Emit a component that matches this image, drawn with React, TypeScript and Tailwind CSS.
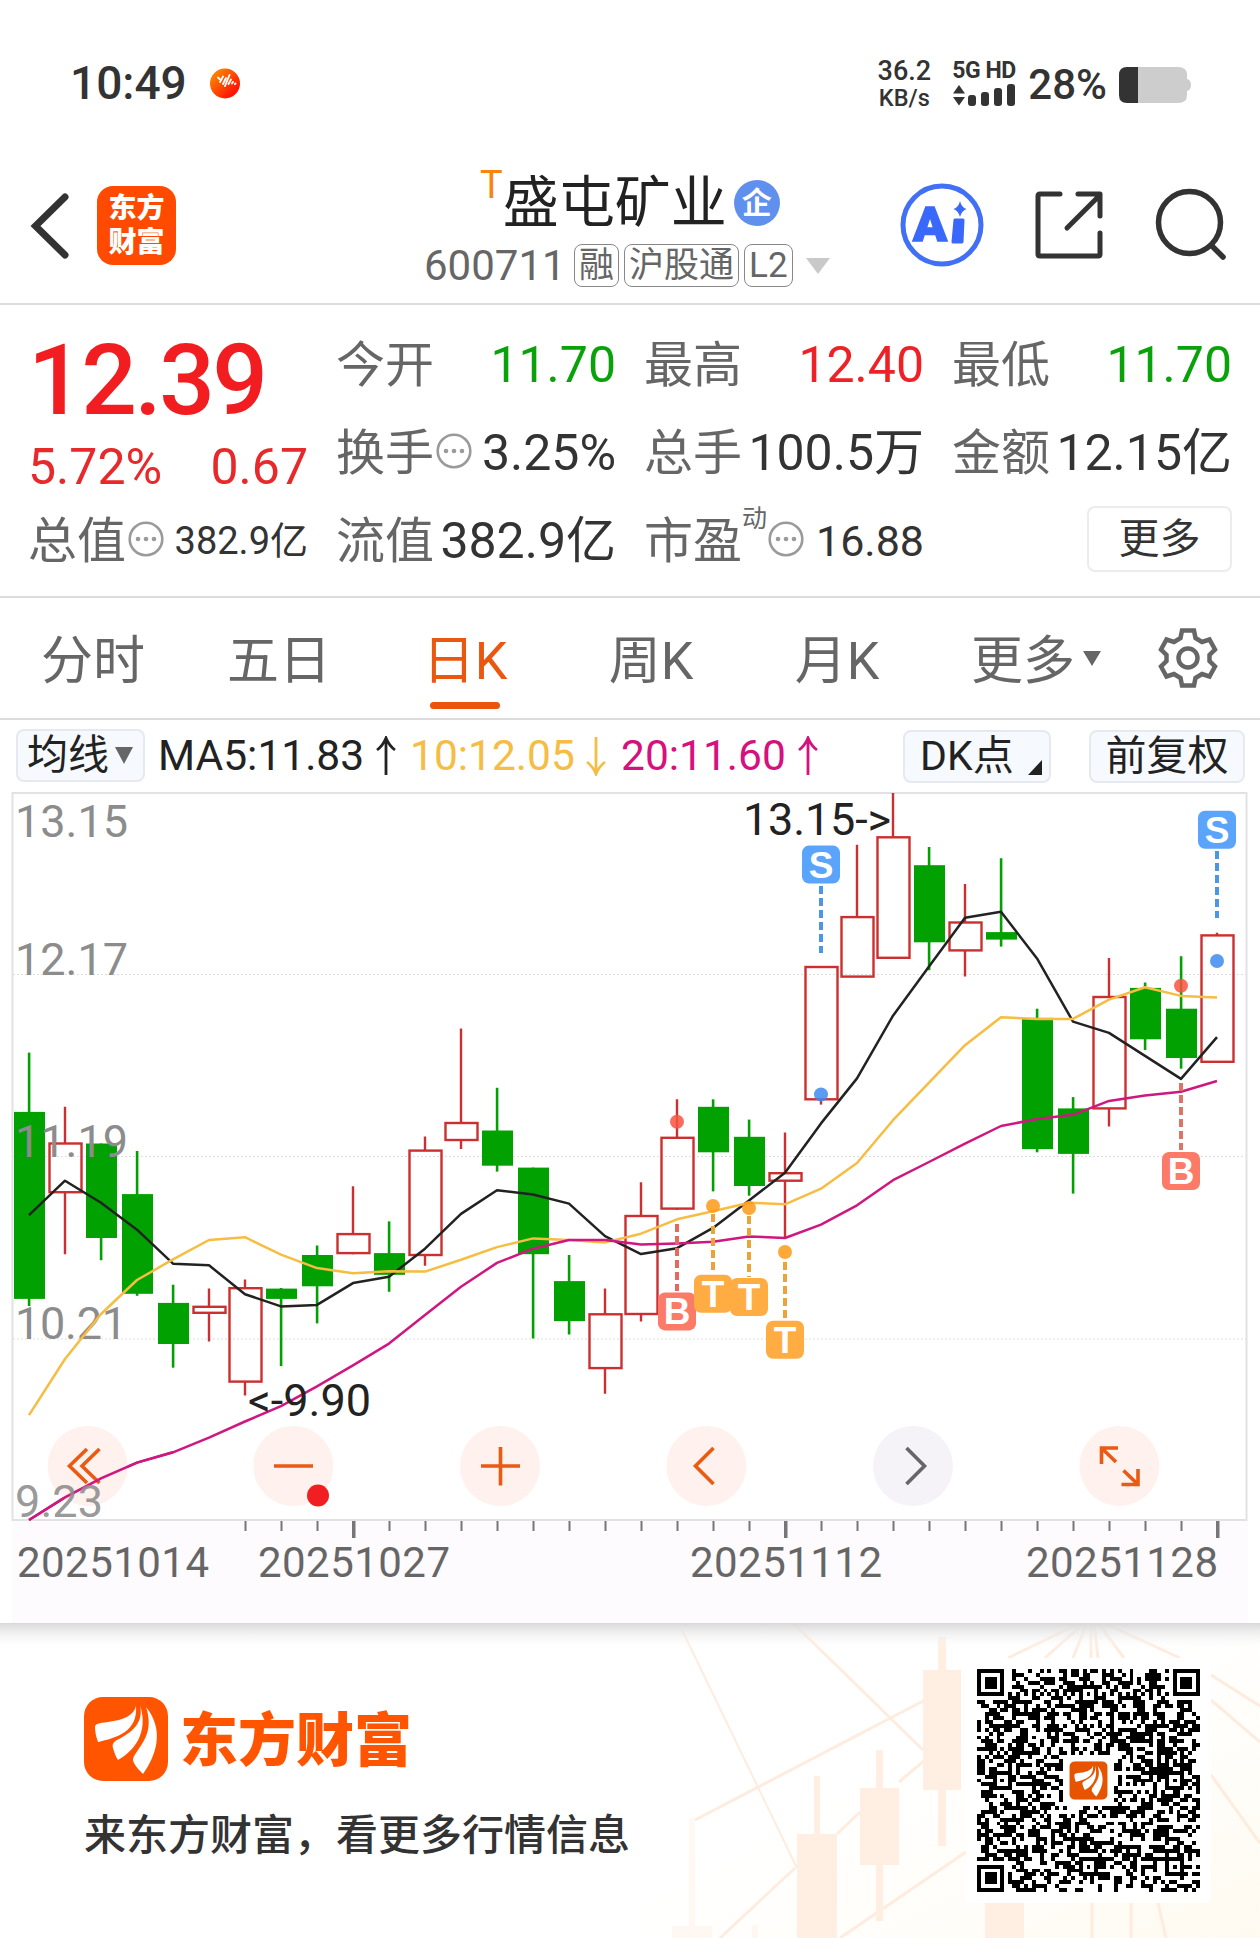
import type { ReactNode } from "react";

type Candle = [dir: "up" | "down", high: number, top: number, bottom: number, low: number];

// y values are in the coordinate space of the chart's viewBox (starts at y=792)
const candles: Candle[] = [
  ["down", 1052.6, 1111.9, 1298.9, 1306],
  ["up", 1106.8, 1143.5, 1192.2, 1254.2],
  ["down", 1143.5, 1143.5, 1238, 1260.2],
  ["down", 1151, 1194.1, 1293.8, 1295.8],
  ["down", 1284.7, 1302.9, 1344, 1367.7],
  ["up", 1288.6, 1306.8, 1312.8, 1341.6],
  ["up", 1279.5, 1288.2, 1381.6, 1395.4],
  ["down", 1288, 1288.6, 1298.9, 1366.1],
  ["down", 1245.5, 1255, 1286.3, 1323.4],
  ["up", 1186.2, 1234.1, 1253.1, 1254.2],
  ["down", 1221.4, 1253.1, 1274.8, 1291.8],
  ["up", 1136.4, 1150.6, 1255, 1265.7],
  ["up", 1028.5, 1123, 1140, 1149.1],
  ["down", 1087.8, 1130.5, 1165.7, 1171.6],
  ["down", 1167.6, 1167.6, 1254.2, 1338.5],
  ["down", 1255, 1281.1, 1321.1, 1334.5],
  ["up", 1288.6, 1314.3, 1368.1, 1393.8],
  ["up", 1182.3, 1216, 1314, 1321.6],
  ["up", 1099.3, 1137.8, 1208.6, 1210],
  ["down", 1099.3, 1106.8, 1152.3, 1191.4],
  ["down", 1119.6, 1136.8, 1186, 1195.7],
  ["up", 1132.5, 1173.2, 1180.7, 1238],
  ["up", 967, 967, 1099.3, 1104.6],
  ["up", 844.8, 917.1, 976.6, 976.6],
  ["up", 793, 837.3, 957.8, 957.8],
  ["down", 847, 865.2, 942.3, 970.2],
  ["up", 883.9, 922.5, 950.4, 976.6],
  ["down", 858.2, 932.1, 939.6, 946.6],
  ["down", 1008.7, 1017.9, 1149.1, 1152.3],
  ["down", 1097.1, 1108.4, 1153.9, 1193.6],
  ["up", 957.9, 997, 1108.4, 1126.6],
  ["down", 982.5, 987.9, 1039.3, 1050],
  ["down", 956.2, 1008.7, 1058, 1068.7],
  ["up", 932.7, 935.4, 1061.8, 1061.8],
];

const ma5 = [
  1215.1, 1180.7, 1202.8, 1229.7, 1263.7, 1265.3, 1294.2, 1306.4, 1304.9, 1283.1, 1276.8, 1248.7,
  1213.9, 1190.2, 1194.5, 1203.6, 1236.1, 1254.1, 1248.2, 1227.9, 1200.5, 1172.7, 1123.4, 1078.4,
  1015.7, 966.4, 917.7, 911.8, 958.4, 1021.6, 1032.9, 1055.9, 1078.9, 1037.1,
];
const ma10 = [
  1415.2, 1359, 1314, 1280, 1259.4, 1240, 1237.2, 1254.6, 1268.1, 1273.2, 1271.2, 1271.6, 1259.8,
  1247.1, 1238.4, 1240, 1242.4, 1233.7, 1219.3, 1211.2, 1202.7, 1204.3, 1188.7, 1163, 1120.2,
  1082.7, 1045.2, 1017.3, 1018.9, 1018.9, 999.6, 987.3, 995.9, 997.5,
];
const ma20 = [
  1520, 1497.4, 1478.4, 1462.6, 1452.3, 1437.7, 1421.5, 1406.1, 1386.3, 1365.3, 1343.6, 1315.1,
  1286.7, 1262.9, 1248.7, 1240, 1240, 1244.5, 1243.4, 1241.8, 1236.4, 1238, 1224.6, 1205.3, 1180.2,
  1162, 1143.7, 1126, 1119.1, 1114.8, 1100.9, 1095.5, 1091.8, 1081,
];

const markers = [
  { i: 22, y: 864.6, from: 886, to: 953, dot: 1094.5, label: "S", color: "#5aa4fb", dash: "#4a97e6" },
  { i: 33, y: 829.8, from: 851, to: 918, dot: 961, label: "S", color: "#5aa4fb", dash: "#4a97e6" },
  { i: 18, y: 1311.4, from: 1224, to: 1291, dot: 1121.8, label: "B", color: "#fb7b68", dash: "#e56a5c" },
  { i: 32, y: 1171, from: 1083, to: 1150, dot: 985.7, label: "B", color: "#fb7b68", dash: "#dd7466" },
  { i: 19, y: 1293.7, from: 1214, to: 1274, dot: 1205.9, label: "T", color: "#ffac42", dash: "#eba43a" },
  { i: 20, y: 1297, from: 1216, to: 1277, dot: 1208, label: "T", color: "#ffac42", dash: "#eba43a" },
  { i: 21, y: 1339.8, from: 1262, to: 1320, dot: 1252, label: "T", color: "#ffac42", dash: "#eba43a" },
];

const dotColors: Record<string, string> = { S: "#3d8bf0", B: "#f9543f", T: "#fb9a17" };

const cx = (i: number) => 29 + i * 36;
const toPoints = (ys: number[]) => ys.map((y, i) => `${cx(i)},${y}`).join(" ");

function More() {
  return (
    <svg width="36" height="42" viewBox="0 0 36 42">
      <circle cx="18" cy="19" r="16.3" fill="none" stroke="#9a9a9a" strokeWidth="2.6" />
      <circle cx="10" cy="19" r="2.3" fill="#9a9a9a" />
      <circle cx="18" cy="19" r="2.3" fill="#9a9a9a" />
      <circle cx="26" cy="19" r="2.3" fill="#9a9a9a" />
    </svg>
  );
}

function BrandMark({ size, color, radius }: { size: number; color: string; radius: number }) {
  return (
    <svg width={size} height={size} viewBox="0 0 84 84">
      <rect width="84" height="84" rx={radius} fill={color} />
      <path d="M52 9C50 18 40 23 24 25C15 26 11 27 11 30C11 34 12 40 14 45C32 41 54 35 52 9Z" fill="#fff" />
      <path d="M56 8C60 26 48 35 35 42C29 45 28 47 29 51C30 55 32 60 34 63C50 54 65 36 56 8Z" fill="#fff" />
      <path d="M62 10C69 31 61 43 54 53C49 60 48 62 50 66C52 70 56 74 59 77C72 59 81 33 62 10Z" fill="#fff" />
    </svg>
  );
}

function StatusBar() {
  return (
    <div className="flex h-[168px] items-center pl-[70px] font-medium text-[#333]">
      <span className="-mt-[2px] text-[46px] leading-none">10:49</span>
      <svg className="ml-[22px]" width="32" height="32" viewBox="0 0 32 32">
        <defs>
          <linearGradient id="dot" x1="0" y1="0" x2="1" y2="1">
            <stop offset="0.2" stopColor="#ff7a00" />
            <stop offset="0.8" stopColor="#ff1400" />
          </linearGradient>
        </defs>
        <circle cx="16" cy="15.500" r="15" fill="url(#dot)" />
        <path
          d="M9 9.5L10.5 11M11 14L14 8.500M14 16L17 10M16 18L20.500 7M19.500 16L22 11.500M23 15.500L24 14M26 16L26.500 15.500"
          stroke="#fff"
          strokeWidth="1.9"
          strokeLinecap="round"
        />
      </svg>
      <div className="ml-auto flex w-14 flex-col items-center gap-[3px]">
        <span className="text-[27px] leading-[25px]">36.2</span>
        <span className="text-[23.5px] leading-[23px]">KB/s</span>
      </div>
      <div className="-mt-[3px] ml-[20px] flex w-[64px] flex-col">
        <span className="text-[23px] leading-[25px] font-bold tracking-[-0.500px] whitespace-nowrap">5G HD</span>
        <svg width="64" height="24" viewBox="0 0 64 24" fill="#333">
          <path d="M7 2L13 10.500H1ZM7 22.500L13 14H1Z" />
          <rect x="16" y="12" width="8" height="11" rx="3" />
          <rect x="29" y="9" width="8" height="14" rx="3" />
          <rect x="42" y="5" width="8" height="18" rx="3" />
          <rect x="55" y="1" width="8" height="22" rx="3" />
        </svg>
      </div>
      <span className="mt-[2px] ml-[12px] text-[42px] leading-none">28%</span>
      <svg className="mt-[2px] mr-[68px] ml-[11px]" width="74" height="38" viewBox="0 0 74 38">
        <path d="M19 1H60Q69 1 69 9V13Q73 14 73 19Q73 24 69 25V29Q69 37 60 37H19Z" fill="#cdcdcd" />
        <path d="M20 1H9Q1 1 1 9V29Q1 37 9 37H20Z" fill="#333" />
      </svg>
    </div>
  );
}

function Tag({ children }: { children: ReactNode }) {
  return (
    <span className="flex h-[43px] items-center rounded-lg border-[1.5px] border-[#888] px-1 text-[35px] leading-none whitespace-nowrap">
      {children}
    </span>
  );
}

function Header() {
  return (
    <header className="flex h-[137px] items-start border-b-2 border-[#dadcde]">
      <svg className="mt-[22px] ml-[28px]" width="44" height="72" viewBox="0 0 44 72">
        <path d="M37 7L7.500 36L37 65" fill="none" stroke="#333" strokeWidth="7" strokeLinecap="round" />
      </svg>
      <div className="mt-[18px] ml-[25px] flex size-[79px] flex-col items-center justify-center rounded-2xl bg-[#ff4a00] text-[28px] leading-[34px] font-black text-white">
        <span>东方</span>
        <span>财富</span>
      </div>
      <div className="ml-[248px] flex w-[408px] flex-col">
        <div className="flex h-[70px] items-center pl-[56px]">
          <span className="-mt-[36px] text-[38px] leading-none text-[#f98510]">T</span>
          <span className="text-[56px] leading-none whitespace-nowrap text-[#222]">盛屯矿业</span>
          <span className="ml-[7px] flex size-[46px] shrink-0 items-center justify-center rounded-full bg-[#6090ee] text-[30px] leading-none font-bold text-white">
            企
          </span>
        </div>
        <div className="mt-[6px] flex items-center gap-[5px] text-[#666]">
          <span className="mr-[6px] w-[139px] text-[42px] leading-none">600711</span>
          <Tag>融</Tag>
          <Tag>沪股通</Tag>
          <Tag>L2</Tag>
          <svg className="ml-[7px]" width="26" height="18" viewBox="0 0 26 18">
            <path d="M1 1H25L13 17Z" fill="#c9c9c9" />
          </svg>
        </div>
      </div>
      <svg className="mt-[14px] ml-[67px]" width="86" height="86" viewBox="0 0 86 86">
        <circle cx="43" cy="43" r="39" fill="none" stroke="#4170f5" strokeWidth="5" />
        <text
          x="14"
          y="59"
          fontSize="48"
          fontWeight="900"
          fill="#3a68fb"
          stroke="#3a68fb"
          strokeWidth="1.500"
          textLength="34"
          lengthAdjust="spacingAndGlyphs"
          className="font-[Roboto]"
        >
          A
        </text>
        <path d="M56 38H64L63 60H54Z" fill="#3a68fb" stroke="#3a68fb" strokeWidth="3" strokeLinejoin="round" />
        <path d="M61 19Q62.500 25.500 67.500 27Q62.500 29 61 35Q59.500 29 54.500 27Q59.500 25.500 61 19Z" fill="#3a68fb" />
      </svg>
      <svg
        className="mt-[19px] ml-[47px]"
        width="74"
        height="74"
        viewBox="0 0 74 74"
        fill="none"
        stroke="#333"
        strokeWidth="5"
        strokeLinecap="round"
        strokeLinejoin="round"
      >
        <path d="M28 7H8Q6 7 6 9V67Q6 69 8 69H66Q68 69 68 67V46" />
        <path d="M46 7H68V29M67 9L35 41" />
      </svg>
      <svg
        className="mt-[18px] ml-[45px]"
        width="80"
        height="80"
        viewBox="0 0 80 80"
        fill="none"
        stroke="#333"
        strokeWidth="5.500"
        strokeLinecap="round"
      >
        <circle cx="38.500" cy="36.500" r="31" />
        <path d="M61 60L72 71" />
      </svg>
    </header>
  );
}

function Stat({ label, value, tone = "text-[#333]", size = "text-[50px]" }: {
  label: ReactNode;
  value: string;
  tone?: string;
  size?: string;
}) {
  return (
    <div className="flex h-[88px] items-center justify-between leading-none whitespace-nowrap">
      <div className="flex items-center text-[49px] text-[#666]">{label}</div>
      <div className={`${tone} ${size}`}>{value}</div>
    </div>
  );
}

function Quote() {
  return (
    <section className="grid h-[293px] grid-cols-4 content-start gap-x-7 border-b-2 border-[#dcdcdc] px-7 pt-4">
      <div className="row-span-2 flex flex-col leading-none">
        <div className="mt-[11px] text-[98px] font-medium tracking-[-2.500px] text-[#f21d20]">12.39</div>
        <div className="mt-[12px] flex justify-between text-[50px] text-[#e8292b]">
          <span>5.72%</span>
          <span>0.67</span>
        </div>
      </div>
      <Stat label="今开" value="11.70" tone="text-[#0aa20a]" />
      <Stat label="最高" value="12.40" tone="text-[#ee2226]" />
      <Stat label="最低" value="11.70" tone="text-[#0aa20a]" />
      <Stat label={<>换手<span className="w-[2px]" /><More /></>} value="3.25%" />
      <Stat label="总手" value="100.5万" />
      <Stat label="金额" value="12.15亿" />
      <Stat label={<>总值<span className="w-[2px]" /><More /></>} value="382.9亿" size="text-[38px]" />
      <Stat label="流值" value="382.9亿" />
      <Stat
        label={
          <>
            市盈<span className="-mt-[46px] mr-[1px] text-[25px]">动</span>
            <More />
          </>
        }
        value="16.88"
        size="text-[43px]"
      />
      <div className="flex h-[88px] items-center justify-end">
        <button className="-mt-[4px] h-[66px] w-[145px] rounded-lg border-2 border-[#ececec] text-[41px] leading-none text-[#333]">
          更多
        </button>
      </div>
    </section>
  );
}

const tabs = ["分时", "五日", "日K", "周K", "月K"];

function Tabs() {
  return (
    <nav className="flex h-[122px] border-b-2 border-[#dcdcdc] text-[52px] leading-none text-[#666]">
      {tabs.map((tab) => (
        <div
          key={tab}
          className={`flex w-[186px] flex-col items-center pt-[38px] ${tab === "日K" ? "text-[#ec570f]" : ""}`}
        >
          {tab}
          {tab === "日K" && <span className="mt-[14px] h-[7px] w-[70px] rounded-full bg-[#ec530c]" />}
        </div>
      ))}
      <div className="flex h-[127px] items-center pl-[41px]">
        更多
        <svg className="-mt-[6px] ml-[8px]" width="18" height="15" viewBox="0 0 18 15">
          <path d="M0 0H18L9 15Z" fill="#666" />
        </svg>
      </div>
      <svg className="mt-[28px] ml-[55px]" width="64" height="64" viewBox="0 0 64 64" fill="none" stroke="#666" strokeWidth="4.500">
        <path d="M26 4.500H38L39.500 12L46 16L53.500 13.500L59 23.500L53.500 29V35L59 40.500L53.500 50.500L46 48L39.500 52L38 59.500H26L24.500 52L18 48L10.500 50.500L5 40.500L10.500 35V29L5 23.500L10.500 13.500L18 16L24.500 12Z" />
        <circle cx="32" cy="32" r="9.500" />
      </svg>
    </nav>
  );
}

function Arrow({ down }: { down?: boolean }) {
  return (
    <svg
      className={down ? "rotate-180" : ""}
      width="22"
      height="40"
      viewBox="0 0 22 40"
      fill="none"
      stroke="currentColor"
      strokeWidth="2.800"
    >
      <path d="M11 39V3M2 14Q8 9.500 11 2Q14 9.500 20 14" />
    </svg>
  );
}

function ChartToolbar() {
  return (
    <div className="flex h-[72px] items-center pl-4 text-[41px] leading-none whitespace-nowrap text-[#222]">
      <div className="-mt-[2px] flex h-[53px] w-[129px] items-center rounded-lg border-2 border-[#e6e9f0] bg-[#f6f9fe] pl-[9px]">
        均线
        <svg className="ml-[6px]" width="18" height="17" viewBox="0 0 18 17">
          <path d="M0 0H18L9 17Z" fill="#666" />
        </svg>
      </div>
      <div className="ml-[13px] flex w-[252px] items-center gap-[11px] text-[42.5px]">
        MA5:11.83
        <Arrow />
      </div>
      <div className="flex w-[211px] items-center gap-[10px] text-[42.5px] text-[#f5bd45]">
        10:12.05
        <Arrow down />
      </div>
      <div className="flex w-[282px] items-center gap-[11px] text-[42.5px] text-[#d5107f]">
        20:11.60
        <Arrow />
      </div>
      <div className="flex h-[53px] w-[148px] items-center rounded-lg border-2 border-[#e6e9f0] bg-[#f6f9fe] pl-[15px]">
        DK点
        <svg className="mt-[22px] ml-[14px]" width="14" height="15" viewBox="0 0 14 15">
          <path d="M14 0V15H0Z" fill="#222" />
        </svg>
      </div>
      <div className="ml-[38px] flex h-[53px] w-[156px] items-center justify-center rounded-lg border-2 border-[#e6e9f0] bg-[#f6f9fe]">
        前复权
      </div>
    </div>
  );
}

function KLineChart() {
  return (
    <svg className="block" width="1260" height="831" viewBox="0 792 1260 831">
      <rect x="12" y="1521" width="1236" height="102" fill="#fefbff" />
      <g stroke="#dedede" strokeWidth="1.200" strokeDasharray="2 2">
        <path d="M13 974.500H1246M13 1156.500H1246M13 1339H1246" />
      </g>
      <rect x="12.500" y="793" width="1234" height="727" fill="none" stroke="#e2e2e4" strokeWidth="2" />

      {candles.map(([dir, high, top, bottom, low], i) =>
        dir === "down" ? (
          <g key={i} fill="#02a102">
            <rect x={cx(i) - 1.2} y={high} width="2.600" height={low - high} />
            <rect x={cx(i) - 15} y={top} width="31" height={bottom - top} />
          </g>
        ) : (
          <g key={i} stroke="#cb2f2f" strokeWidth="2.400" fill="none">
            <path d={`M${cx(i)} ${high}V${top}M${cx(i)} ${bottom}V${low}`} />
            <rect x={cx(i) - 15.500} y={top} width="32" height={bottom - top} />
          </g>
        )
      )}

      <g className="font-[Roboto]" fontSize="45" fill="#8c8c8c">
        <text x="15" y="837" textLength="113">13.15</text>
        <text x="15" y="975" textLength="113">12.17</text>
        <text x="15" y="1157" textLength="113">11.19</text>
        <text x="15" y="1339" textLength="112">10.21</text>
      </g>

      <g fill="none" strokeWidth="2.500" strokeLinejoin="round">
        <polyline points={toPoints(ma5)} stroke="#222" />
        <polyline points={toPoints(ma10)} stroke="#f6bd42" />
        <polyline points={toPoints(ma20)} stroke="#cf1780" />
      </g>

      {markers.map((m) => (
        <g key={`${m.label}${m.i}`}>
          <path d={`M${cx(m.i)} ${m.from}V${m.to}`} stroke={m.dash} strokeWidth="4" strokeDasharray="8 4" />
          <circle cx={cx(m.i)} cy={m.dot} r="7" fill={dotColors[m.label]} fillOpacity="0.850" />
          <rect x={cx(m.i) - 19} y={m.y - 19} width="38" height="38" rx="7" fill={m.color} />
          <text
            x={cx(m.i)}
            y={m.y + 13}
            textAnchor="middle"
            fontSize="37"
            fontWeight="700"
            fill="#fff"
            className="font-['Liberation_Sans']"
          >
            {m.label}
          </text>
        </g>
      ))}

      <g className="font-[Roboto]" fontSize="45" fill="#222">
        <text x="743" y="835" textLength="148">{"13.15->"}</text>
        <text x="248" y="1416" textLength="123">{"<-9.90"}</text>
      </g>

      {[87.6, 293.3, 500, 706.3, 913, 1119.4].map((x) => (
        <circle key={x} cx={x} cy="1466" r="40" fill={x === 913 ? "#f2eff6" : "#ffede8"} fillOpacity="0.800" />
      ))}
      <g fill="none" stroke="#ea5a12" strokeWidth="3.600">
        <path d="M87 1449L69.500 1466L87 1483M99.500 1449L82 1466L99.500 1483" />
        <path d="M274 1466H313M481 1466H520M500.500 1447V1485.500" />
        <path d="M713.500 1448L695.500 1466L713.500 1484" />
        <path d="M1101.500 1464V1448H1118M1102 1448.500L1116 1462M1138 1469V1484.500H1121.500M1137.500 1484L1123.500 1470.500" />
        <path d="M906.500 1448L924.500 1466L906.500 1484" stroke="#666" />
      </g>
      <polyline points={toPoints(ma20.slice(0, 5))} fill="none" stroke="#cf1780" strokeWidth="2.500" />
      <text x="15" y="1517" fontSize="45" textLength="88" fill="#8c8c8c" fillOpacity="0.900" className="font-[Roboto]">
        9.23
      </text>
      <circle cx="318" cy="1495.500" r="11" fill="#f21f22" />

      {candles.map((_, i) =>
        i < 6 ? null : (
          <rect
            key={i}
            x={cx(i) - (i % 12 === 9 ? 1 : 0.5)}
            y="1521"
            width={i % 12 === 9 ? 3.5 : 2}
            height={i % 12 === 9 ? 17 : 10}
            fill="#777"
          />
        )
      )}
      <g className="font-[Roboto]" fontSize="42" fill="#666">
        <text x="17" y="1577" textLength="192">20251014</text>
        <text x="258" y="1577" textLength="192">20251027</text>
        <text x="690" y="1577" textLength="192">20251112</text>
        <text x="1026" y="1577" textLength="192">20251128</text>
      </g>
    </svg>
  );
}

// Version 10 symbol: 57 modules, alignment centres at 6 / 28 / 50
const QR_SIZE = 57;

function buildQr() {
  let seed = 20251128;
  let path = "";
  const finders = [[0, 0], [50, 0], [0, 50]];
  const aligns = [[28, 6], [6, 28], [50, 28], [28, 50], [50, 50]];
  for (let y = 0; y < QR_SIZE; y++) {
    for (let x = 0; x < QR_SIZE; x++) {
      seed = (Math.imul(seed, 1664525) + 1013904223) >>> 0;
      let on = seed / 4294967296 < 0.5;
      if (x === 6 || y === 6) on = (x + y) % 2 === 0;
      for (const [ax, ay] of aligns) {
        const d = Math.max(Math.abs(x - ax), Math.abs(y - ay));
        if (d <= 2) on = d !== 1;
      }
      for (const [fx, fy] of finders) {
        const d = Math.max(Math.abs(x - fx - 3), Math.abs(y - fy - 3));
        if (d <= 4) on = d === 3 || d <= 1;
      }
      if (Math.abs(x - 28) <= 6 && Math.abs(y - 28) <= 6) on = false;
      if (on) path += `M${x} ${y}h1v1h-1z`;
    }
  }
  return path;
}

const qrPath = buildQr();

function FooterArt() {
  return (
    <svg className="absolute inset-0" width="1260" height="315" viewBox="0 1623 1260 315">
      <defs>
        <linearGradient id="cream" x1="0" y1="0" x2="1" y2="1">
          <stop offset="0.400" stopColor="#fffdf6" stopOpacity="0" />
          <stop offset="1" stopColor="#fffaf0" />
        </linearGradient>
        <linearGradient id="shade" x1="0" y1="0" x2="0" y2="1">
          <stop offset="0" stopColor="#d8d8d8" />
          <stop offset="1" stopColor="#fff" stopOpacity="0" />
        </linearGradient>
      </defs>
      <rect x="640" y="1623" width="620" height="315" fill="url(#cream)" />
      <g fill="none" stroke="#feecdf" strokeWidth="3">
        <path d="M793 1623L923 1750M695 1820L925 1700M720 1938L795 1868M837 1834L860 1812M899 1782L925 1760M840 1938L966 1852" />
        <path d="M682 1630L797 1868" strokeWidth="2" />
        <path d="M1080 1623L1008 1658M1084 1623L1045 1658M1087 1623L1073 1658M1091 1623V1658M1094 1623L1098 1658M1098 1623L1124 1658M1104 1623L1180 1658" />
        <path d="M1211 1675L1260 1706M1211 1700L1260 1742M1211 1775L1260 1843M1092 1903V1938M1131 1903V1938M1158 1903L1166 1938" />
      </g>
      <g fill="#ffeee1">
        <path d="M938 1637h8v33h15v120h-15v56h-8v-56h-15v-120h15z" />
        <path d="M876 1750h7v38h16v77h-16v56h-7v-56h-16v-77h16z" />
        <path d="M814 1776h6v58h17v104h-40v-104h17z" />
        <path d="M985 1903h39v35h-39z" />
        <path d="M689 1818h6v108h17v12h-40v-12h17zM752 1925h6v13h-6z" fillOpacity="0.400" />
      </g>
      <rect x="0" y="1623" width="1260" height="27" fill="url(#shade)" />
    </svg>
  );
}

function Footer() {
  return (
    <footer className="relative h-[315px] overflow-hidden">
      <FooterArt />
      <div className="relative flex items-start justify-between pr-[49px] pl-[84px]">
        <div className="pt-[74px]">
          <div className="flex items-center gap-[12px]">
            <BrandMark size={84} color="#ff5500" radius={19} />
            <span className="mt-[3px] text-[58px] leading-none font-black text-[#ff5500]">东方财富</span>
          </div>
          <p className="mt-[34px] text-[42px] leading-none font-medium text-[#333]">来东方财富，看更多行情信息</p>
        </div>
        <div className="mt-[35px] flex size-[245px] items-center justify-center rounded-md bg-white">
          <svg width="223" height="223" viewBox="0 0 57 57">
            <path d={qrPath} fill="#000" shapeRendering="crispEdges" />
            <svg x="23.600" y="23.600" width="9.800" height="9.800" viewBox="0 0 84 84">
              <BrandMark size={84} color="#e65400" radius={12} />
            </svg>
          </svg>
        </div>
      </div>
    </footer>
  );
}

export default function App() {
  return (
    <div className="h-[1938px] w-[1260px] overflow-hidden bg-white font-[Roboto,'Noto_Sans_CJK_SC',sans-serif]">
      <StatusBar />
      <Header />
      <Quote />
      <Tabs />
      <ChartToolbar />
      <KLineChart />
      <Footer />
    </div>
  );
}
